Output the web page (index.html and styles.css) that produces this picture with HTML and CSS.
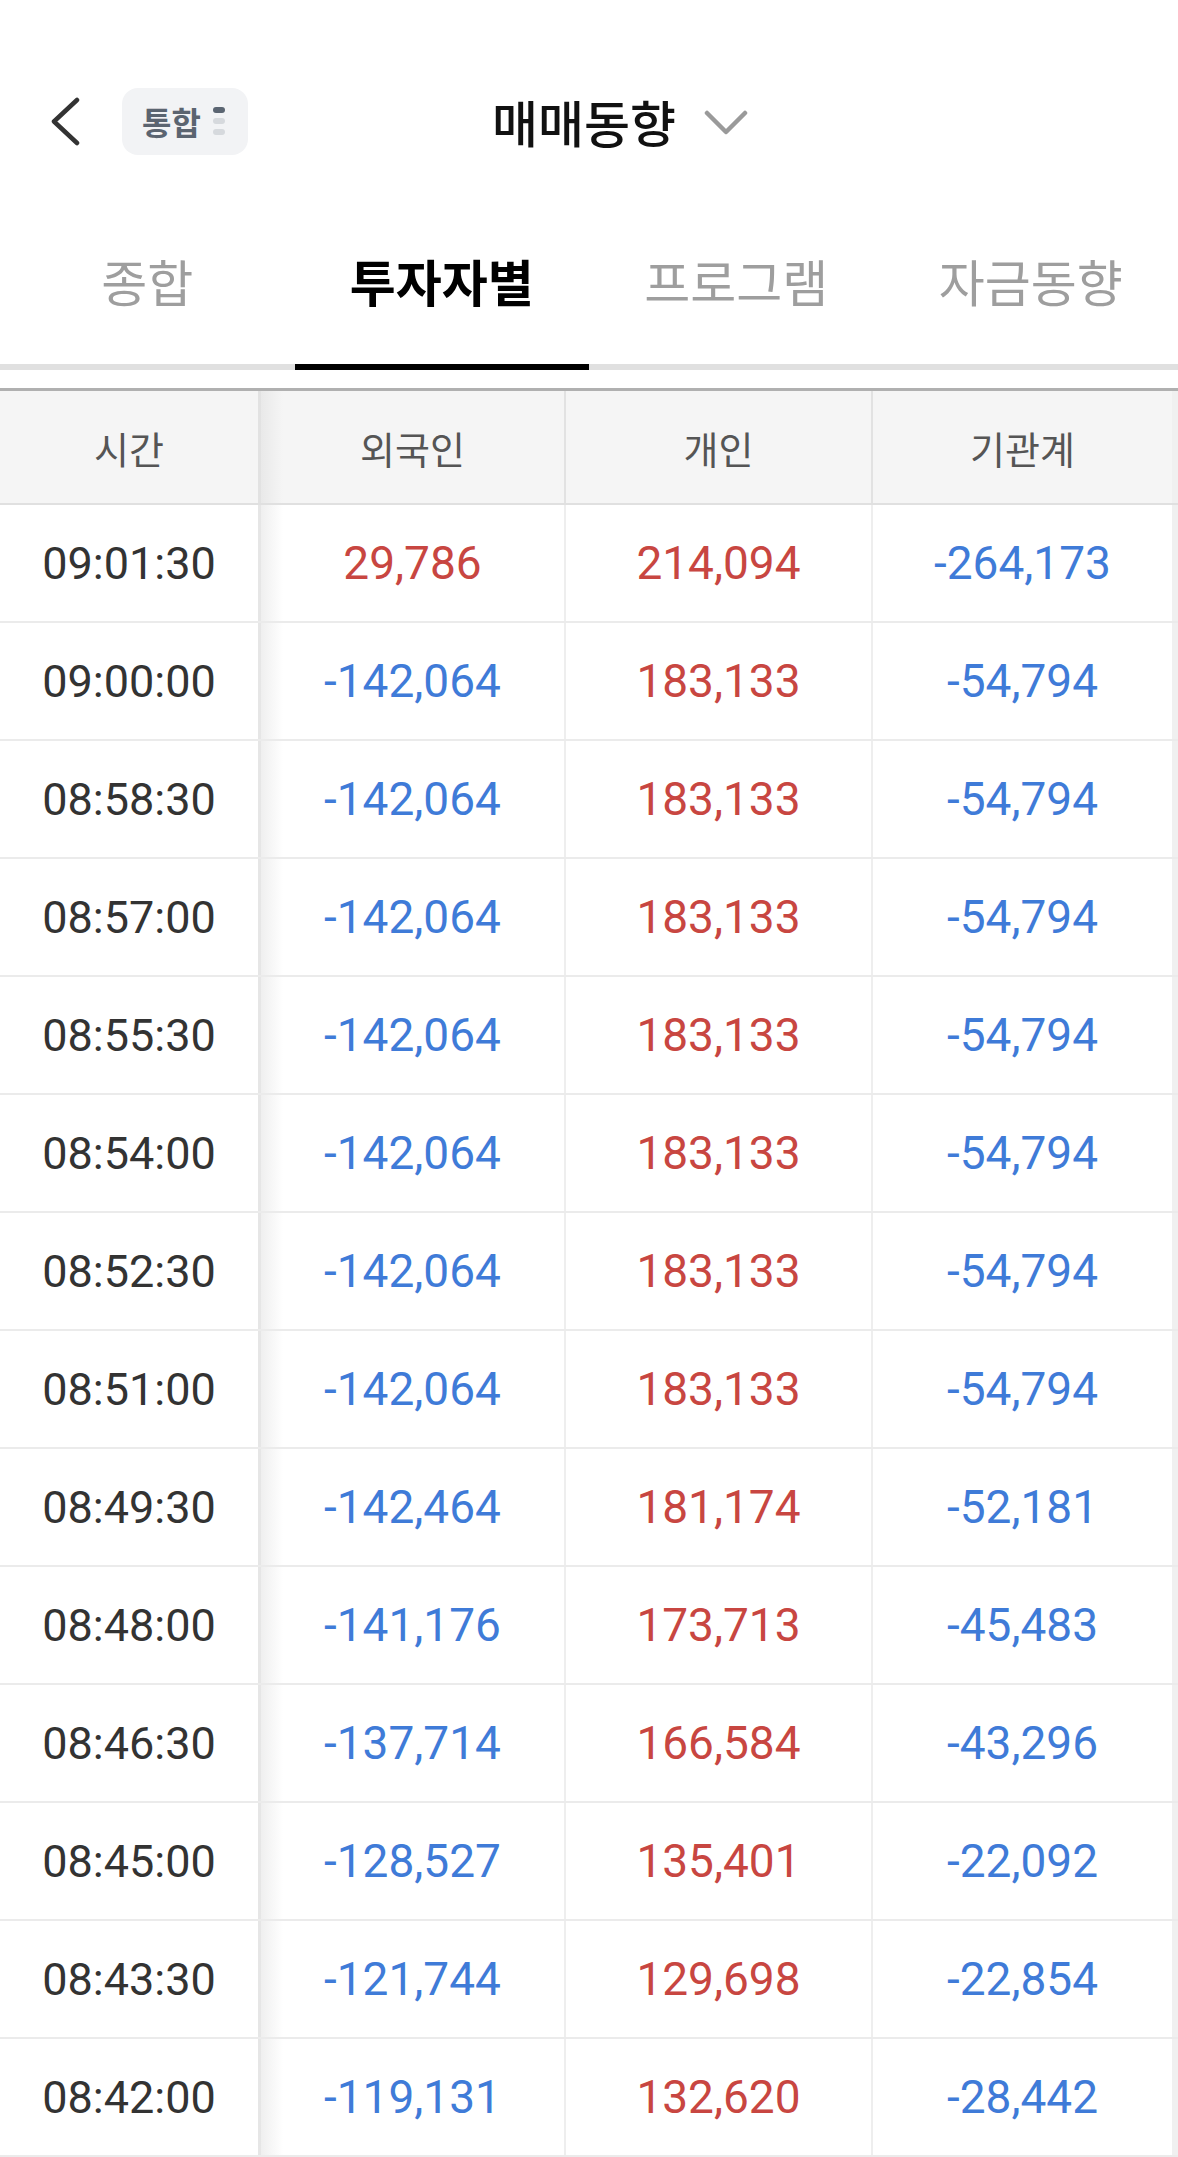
FILE: index.html
```
<!DOCTYPE html>
<html lang="ko">
<head>
    <meta charset="UTF-8">
    <meta name="viewport" content="width=device-width, initial-scale=1.0">
    <title>매매동향</title>
    <link rel="stylesheet" href="styles.css">
</head>
<body>
    <!-- Top bar -->
    <header class="top-bar">
        <div class="top-left">
            <button class="back-btn" type="button" aria-label="뒤로">
                <svg width="32" height="49" viewBox="0 0 32 49">
                    <polyline points="28,3 5,24.5 28,46" fill="none" stroke="#333" stroke-width="4.5" stroke-linecap="round" stroke-linejoin="round"/>
                </svg>
            </button>
            <div class="market-badge">
                <span>통합</span>
                <span class="badge-dots">
                    <i class="on"></i><i></i><i></i>
                </span>
            </div>
        </div>
        <h1 class="page-title">매매동향</h1>
        <div class="top-right">
            <svg width="44" height="26" viewBox="0 0 44 26">
                <polyline points="3,3 22,22 41,3" fill="none" stroke="#9a9a9a" stroke-width="4.5" stroke-linecap="round" stroke-linejoin="round"/>
            </svg>
        </div>
    </header>

    <!-- Tabs -->
    <nav class="tabs">
        <div class="tab">종합</div>
        <div class="tab active">투자자별</div>
        <div class="tab">프로그램</div>
        <div class="tab">자금동향</div>
    </nav>

    <!-- Investor table -->
    <div class="trade-table">
        <div class="row head">
            <div class="cell time">시간</div>
            <div class="cell first-data">외국인</div>
            <div class="cell">개인</div>
            <div class="cell">기관계</div>
        </div>
        <div class="row">
            <div class="cell time">09:01:30</div>
            <div class="cell first-data up">29,786</div>
            <div class="cell up">214,094</div>
            <div class="cell down">-264,173</div>
        </div>
        <div class="row">
            <div class="cell time">09:00:00</div>
            <div class="cell first-data down">-142,064</div>
            <div class="cell up">183,133</div>
            <div class="cell down">-54,794</div>
        </div>
        <div class="row">
            <div class="cell time">08:58:30</div>
            <div class="cell first-data down">-142,064</div>
            <div class="cell up">183,133</div>
            <div class="cell down">-54,794</div>
        </div>
        <div class="row">
            <div class="cell time">08:57:00</div>
            <div class="cell first-data down">-142,064</div>
            <div class="cell up">183,133</div>
            <div class="cell down">-54,794</div>
        </div>
        <div class="row">
            <div class="cell time">08:55:30</div>
            <div class="cell first-data down">-142,064</div>
            <div class="cell up">183,133</div>
            <div class="cell down">-54,794</div>
        </div>
        <div class="row">
            <div class="cell time">08:54:00</div>
            <div class="cell first-data down">-142,064</div>
            <div class="cell up">183,133</div>
            <div class="cell down">-54,794</div>
        </div>
        <div class="row">
            <div class="cell time">08:52:30</div>
            <div class="cell first-data down">-142,064</div>
            <div class="cell up">183,133</div>
            <div class="cell down">-54,794</div>
        </div>
        <div class="row">
            <div class="cell time">08:51:00</div>
            <div class="cell first-data down">-142,064</div>
            <div class="cell up">183,133</div>
            <div class="cell down">-54,794</div>
        </div>
        <div class="row">
            <div class="cell time">08:49:30</div>
            <div class="cell first-data down">-142,464</div>
            <div class="cell up">181,174</div>
            <div class="cell down">-52,181</div>
        </div>
        <div class="row">
            <div class="cell time">08:48:00</div>
            <div class="cell first-data down">-141,176</div>
            <div class="cell up">173,713</div>
            <div class="cell down">-45,483</div>
        </div>
        <div class="row">
            <div class="cell time">08:46:30</div>
            <div class="cell first-data down">-137,714</div>
            <div class="cell up">166,584</div>
            <div class="cell down">-43,296</div>
        </div>
        <div class="row">
            <div class="cell time">08:45:00</div>
            <div class="cell first-data down">-128,527</div>
            <div class="cell up">135,401</div>
            <div class="cell down">-22,092</div>
        </div>
        <div class="row">
            <div class="cell time">08:43:30</div>
            <div class="cell first-data down">-121,744</div>
            <div class="cell up">129,698</div>
            <div class="cell down">-22,854</div>
        </div>
        <div class="row">
            <div class="cell time">08:42:00</div>
            <div class="cell first-data down">-119,131</div>
            <div class="cell up">132,620</div>
            <div class="cell down">-28,442</div>
        </div>
    </div>
</body>
</html>
```

FILE: styles.css
```
* {
    box-sizing: border-box;
}

body {
    margin: 0;
    padding: 0;
    background-color: #fff;
    color: #111;
    font-family: Roboto, "Noto Sans CJK KR", sans-serif;
    overflow: hidden;
}

/* Top bar */
.top-bar {
    height: 242px;
    display: grid;
    grid-template-columns: 1fr auto 1fr;
    align-items: center;
}

.top-left {
    display: flex;
    align-items: center;
    padding-left: 49px;
}

.back-btn {
    background: none;
    border: none;
    padding: 0;
    width: 32px;
    height: 49px;
    display: flex;
}

.market-badge {
    margin-left: 41px;
    height: 67px;
    padding: 0 23px 0 20px;
    display: flex;
    align-items: center;
    gap: 12px;
    background-color: #f2f3f5;
    border-radius: 16px;
    font-family: "Noto Sans CJK KR", sans-serif;
    font-size: 32px;
    font-weight: 700;
    color: #5b6470;
    line-height: 1;
}

.badge-dots {
    display: flex;
    flex-direction: column;
    gap: 5px;
}

.badge-dots i {
    display: block;
    width: 12px;
    height: 6px;
    border-radius: 3px;
    background-color: #d6d9dd;
}

.badge-dots i.on {
    background-color: #5b6572;
}

.page-title {
    margin: 0 10px 0 0;
    font-family: "Noto Sans CJK KR", sans-serif;
    font-size: 50px;
    font-weight: 500;
    line-height: 1;
    color: #111;
}

.top-right {
    display: flex;
    align-items: center;
    padding-left: 18px;
    padding-top: 4px;
}

/* Tabs */
.tabs {
    display: flex;
    height: 128px;
    border-bottom: 6px solid #e0e0e0;
}

.tab {
    flex: 1;
    text-align: center;
    padding-top: 13px;
    margin-bottom: -6px;
    border-bottom: 6px solid transparent;
    font-family: "Noto Sans CJK KR", sans-serif;
    font-size: 50px;
    line-height: 50px;
    color: #9e9e9e;
}

.tab.active {
    color: #000;
    font-weight: 700;
    border-bottom-color: #000;
}

/* Table */
.trade-table {
    margin-top: 18px;
    border-top: 3px solid #b0b0b0;
}

.row {
    display: grid;
    grid-template-columns: 258px 306px 307px 1fr;
    height: 118px;
    border-bottom: 2px solid #ebebeb;
}

.row.head {
    height: 114px;
    background-color: #f5f5f5;
    border-bottom-color: #e0e0e0;
}

.cell {
    display: flex;
    align-items: center;
    justify-content: center;
    font-size: 46px;
    border-left: 2px solid #eeeeee;
}

.cell.time {
    border-left: none;
    font-size: 45px;
    color: #333;
}

.cell.first-data {
    border-left: 3px solid #e6e6e6;
    background: linear-gradient(to right, #efefef, #fff 22px);
}

.head .cell {
    font-family: "Noto Sans CJK KR", sans-serif;
    font-size: 38px;
    color: #555;
    border-left-color: #e2e2e2;
}

.head .cell.first-data {
    background: linear-gradient(to right, #e9e9e9, #f5f5f5 22px);
}

.cell:last-child {
    border-right: 6px solid #f0f0f0;
}

.up {
    color: #c84641;
}

.down {
    color: #3f7bd8;
}
```
